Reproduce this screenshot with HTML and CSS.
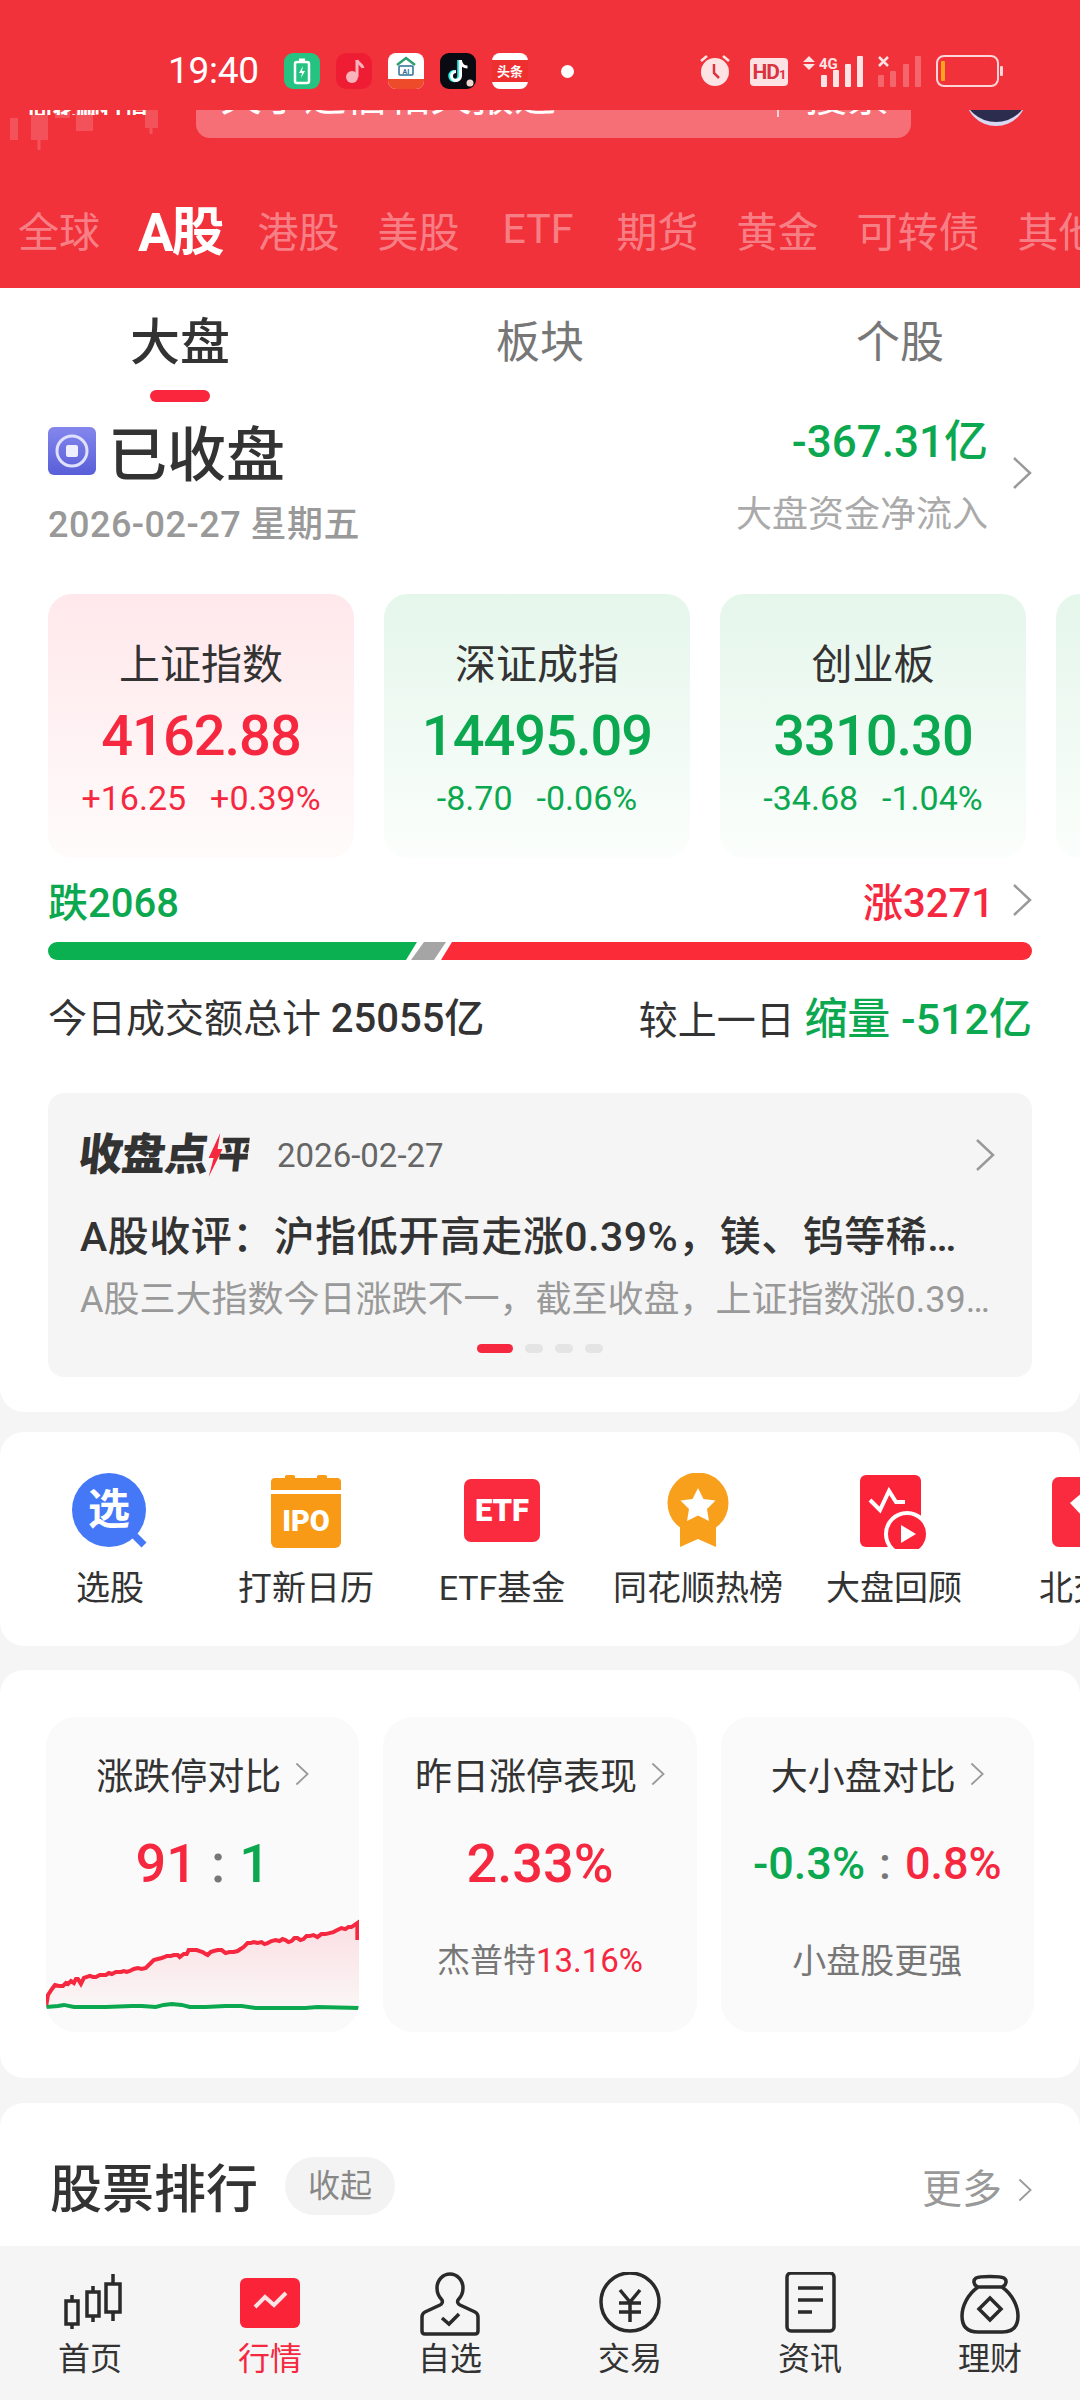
FILE: index.html
```html
<!DOCTYPE html>
<html lang="zh-CN">
<head>
    <meta charset="UTF-8">
    <meta name="viewport" content="width=device-width, initial-scale=1.0">
    <title>行情</title>
    <link rel="stylesheet" href="styles.css">
</head>
<body>
<div class="page">
    <header class="header">
        <div class="status">
            <span class="time">19:40</span>
            <svg class="app" viewBox="0 0 36 36"><rect width="36" height="36" rx="9" fill="#26c281"/><rect x="11" y="9" width="14" height="21" rx="2" fill="none" stroke="#fff" stroke-width="2.5"/><rect x="15" y="5.5" width="6" height="3" fill="#fff"/><path d="M19 13l-4 7h3l-1 5 4-7h-3z" fill="#fff"/></svg>
            <svg class="app" viewBox="0 0 36 36"><rect width="36" height="36" rx="10" fill="#ef1d33"/><path d="M21 7v17" stroke="#f9b3ba" stroke-width="3"/><circle cx="16" cy="24" r="6" fill="#f9b3ba"/><path d="M21 7c1 4 5 4 6 8" fill="none" stroke="#f9b3ba" stroke-width="3"/></svg>
            <svg class="app" viewBox="0 0 36 36"><rect width="36" height="36" rx="8" fill="#fff"/><path d="M0 26h36v2a8 8 0 0 1-8 8H8a8 8 0 0 1-8-8z" fill="#ee4b2b"/><path d="M9 12L18 5l9 7" fill="none" stroke="#2c9f6f" stroke-width="2.500"/><rect x="11" y="13" width="14" height="9" rx="1" fill="none" stroke="#2a6f97" stroke-width="1.500"/><text x="18" y="20.500" class="app-mini">AI</text></svg>
            <svg class="app" viewBox="0 0 36 36"><rect width="36" height="36" rx="9" fill="#0a0a12"/><path d="M19 7v16a4.500 4.500 0 1 1-4.500-4.500" fill="none" stroke="#25f4ee" stroke-width="3.500"/><path d="M20.500 7v16a4.500 4.500 0 1 1-4.500-4.500M20.500 8c1 4 4 6 7 6" fill="none" stroke="#fff" stroke-width="3"/><circle cx="30" cy="30" r="3.500" fill="#f2d9d0"/></svg>
            <svg class="app" viewBox="0 0 36 36"><rect width="36" height="36" rx="8" fill="#fff"/><rect y="7" width="36" height="22" fill="#ee2f2f"/><text x="18" y="23" class="app-toutiao">头条</text></svg>
            <span class="dot"></span>
            <div class="status-right">
                <svg class="ic-alarm" viewBox="0 0 32 34"><path d="M2 8l6-5M30 8l-6-5" stroke="#fde3e4" stroke-width="2.500"/><circle cx="16" cy="19" r="14" fill="#fde3e4"/><path d="M15 11v9l5 5" fill="none" stroke="#d9343f" stroke-width="2.500"/></svg>
                <span class="hd">HD<small>1</small></span>
                <svg class="ic-signal" viewBox="0 0 60 32"><path d="M6 1l6 6H0zM6 15l6-6H0z" fill="#fde3e4"/><text x="16" y="14" class="net">4G</text><rect x="18" y="20" width="6" height="12" rx="1" fill="#fde3e4"/><rect x="30" y="15" width="6" height="17" rx="1" fill="#fde3e4"/><rect x="42" y="9" width="6" height="23" rx="1" fill="#fde3e4"/><rect x="54" y="1" width="6" height="31" rx="1" fill="#fde3e4"/></svg>
                <svg class="ic-signal2" viewBox="0 0 44 32"><path d="M1 2l9 9M10 2l-9 9" stroke="#fde3e4" stroke-width="2.500"/><rect y="20" width="6" height="12" rx="1" fill="#fff" opacity=".25"/><rect x="12" y="16" width="6" height="16" rx="1" fill="#fff" opacity=".25"/><rect x="25" y="9" width="6" height="23" rx="1" fill="#fff" opacity=".25"/><rect x="37" y="1" width="6" height="31" rx="1" fill="#fff" opacity=".25"/></svg>
                <svg class="ic-battery" viewBox="0 0 67 32"><rect x="1" y="1" width="61" height="30" rx="7" fill="none" stroke="#fbd5d7" stroke-width="2"/><rect x="5" y="6" width="4" height="20" rx="1" fill="#f8a51d"/><rect x="64" y="11" width="3" height="10" rx="1" fill="#fbd5d7"/></svg>
            </div>
        </div>
        <div class="search-row">
            <div class="logo">
                <span class="logo-text">同花顺行情</span>
                <svg class="logo-candles" viewBox="0 0 150 40"><path d="M0 8h8v22H0zM21 5h17v25H21zM45 0h15v8H45zM66 0h17v21H66zM135 0h13v18h-13z" fill="#fff" opacity=".16"/><path d="M29 30v10M141 18v6" stroke="#fff" stroke-width="3" opacity=".16"/></svg>
            </div>
            <div class="search">
                <span class="search-text">关于通信相关报道</span>
                <span class="search-line"></span>
                <span class="search-btn">搜索</span>
            </div>
            <div class="avatar"><div class="avatar-in"></div></div>
        </div>
        <nav class="market-tabs">
            <span>全球</span>
            <span class="on">A股</span>
            <span>港股</span>
            <span>美股</span>
            <span class="etf">ETF</span>
            <span>期货</span>
            <span>黄金</span>
            <span>可转债</span>
            <span>其他</span>
        </nav>
    </header>

    <section class="block block-main">
        <div class="sub-tabs">
            <div class="sub-tab on">大盘<i></i></div>
            <div class="sub-tab">板块</div>
            <div class="sub-tab">个股</div>
        </div>

        <div class="closing">
            <div>
                <div class="closing-title">
                    <svg class="stop-ic" viewBox="0 0 48 48"><defs><linearGradient id="st" x1="0" y1="0" x2="0" y2="1"><stop offset="0" stop-color="#8387ec"/><stop offset="1" stop-color="#5a5ed8"/></linearGradient></defs><rect width="48" height="48" rx="6" fill="url(#st)"/><circle cx="24" cy="24" r="15" fill="none" stroke="#dfe0fb" stroke-width="3"/><rect x="18" y="18" width="12" height="12" rx="2" fill="#eeeefd"/></svg>
                    <span>已收盘</span>
                </div>
                <div class="closing-date">2026-02-27 星期五</div>
            </div>
            <div class="flow">
                <div>
                    <div class="flow-num green">-367.31亿</div>
                    <div class="flow-label">大盘资金净流入</div>
                </div>
                <svg class="chev" viewBox="0 0 20 32"><path d="M2 1l16 15L2 31" /></svg>
            </div>
        </div>

        <div class="index-row">
            <div class="index-card up">
                <div class="index-name">上证指数</div>
                <div class="index-val red">4162.88</div>
                <div class="index-sub red"><span>+16.25</span><span>+0.39%</span></div>
            </div>
            <div class="index-card down">
                <div class="index-name">深证成指</div>
                <div class="index-val green">14495.09</div>
                <div class="index-sub green"><span>-8.70</span><span>-0.06%</span></div>
            </div>
            <div class="index-card down">
                <div class="index-name">创业板</div>
                <div class="index-val green">3310.30</div>
                <div class="index-sub green"><span>-34.68</span><span>-1.04%</span></div>
            </div>
            <div class="index-card down"></div>
        </div>

        <div class="breadth">
            <span class="green">跌2068</span>
            <div class="breadth-right">
                <span class="red">涨3271</span>
                <svg class="chev" viewBox="0 0 20 32"><path d="M2 1l16 15L2 31" /></svg>
            </div>
        </div>
        <svg class="breadth-bar" viewBox="0 0 984 18"><path d="M9 0H369L358 18H9A9 9 0 0 1 9 0z" fill="#0bb150"/><path d="M376 0H398L386 18H363z" fill="#a5a5a5"/><path d="M404 0H975A9 9 0 0 1 975 18H393z" fill="#fb2b37"/></svg>

        <div class="turnover">
            <div>今日成交额总计 <b>25055亿</b></div>
            <div>较上一日 <b class="green big">缩量 -512亿</b></div>
        </div>

        <div class="review">
            <div class="review-head">
                <span class="review-logo">收盘点<svg class="bolt" viewBox="0 0 13 44"><path d="M9 0L0 25h5L2 44 13 16H8z" fill="#f6283f"/></svg><span class="review-ping">平</span></span>
                <span class="review-date">2026-02-27</span>
                <svg class="chev chev-review" viewBox="0 0 20 32"><path d="M2 1l16 15L2 31" /></svg>
            </div>
            <div class="review-title">A股收评&#xFF1A;沪指低开高走涨0.39%&#xFF0C;镁、钨等稀土永磁概念股走强</div>
            <div class="review-text">A股三大指数今日涨跌不一&#xFF0C;截至收盘&#xFF0C;上证指数涨0.39%&#xFF0C;深证成指跌0.06%</div>
            <div class="pager"><i class="on"></i><i></i><i></i><i></i></div>
        </div>
    </section>

    <section class="block block-tools">
        <div class="tool">
            <svg class="tool-ic" viewBox="0 0 76 76"><path d="M58 58l14 14" stroke="#4478f7" stroke-width="7"/><circle cx="37" cy="37" r="37" fill="#4478f7"/><text x="37" y="51" class="tool-xuan">选</text></svg>
            <span>选股</span>
        </div>
        <div class="tool">
            <svg class="tool-ic" viewBox="0 0 76 76"><path d="M3 7a4 4 0 0 1 4-4h10V1a3 3 0 0 1 3-1h4a3 3 0 0 1 3 1v2h22V1a3 3 0 0 1 3-1h4a3 3 0 0 1 3 1v2h10a4 4 0 0 1 4 4v8H3z" fill="#f89a16" transform="translate(0 2)"/><path d="M3 21h70v48a6 6 0 0 1-6 6H9a6 6 0 0 1-6-6z" fill="#f89a16"/><text x="38" y="58" class="tool-ipo">IPO</text></svg>
            <span>打新日历</span>
        </div>
        <div class="tool">
            <svg class="tool-ic" viewBox="0 0 76 76"><rect y="6" width="76" height="63" rx="7" fill="#fb2b3f"/><text x="38" y="48" class="tool-etf">ETF</text></svg>
            <span>ETF基金</span>
        </div>
        <div class="tool">
            <svg class="tool-ic" viewBox="0 0 76 76"><path d="M20 50h36v24L38 66 20 74z" fill="#f89f1c"/><circle cx="38" cy="30" r="30.500" fill="#f89f1c"/><path d="M38 15l5.500 11 12 1.500-8.500 8.500 2 12-11-5.500-11 5.500 2-12-8.500-8.500 12-1.500z" fill="#fff"/></svg>
            <span>同花顺热榜</span>
        </div>
        <div class="tool">
            <svg class="tool-ic" viewBox="0 0 76 76"><rect x="4" y="2" width="61" height="72" rx="6" fill="#fb2338"/><path d="M14 27l10 10 9-19 7 11h9" fill="none" stroke="#fff" stroke-width="4"/><circle cx="51" cy="61" r="21" fill="#fb2338" stroke="#fff" stroke-width="4"/><path d="M45 52l15 9-15 9z" fill="#fff"/></svg>
            <span>大盘回顾</span>
        </div>
        <div class="tool">
            <svg class="tool-ic" viewBox="0 0 76 76"><rect y="4" width="76" height="70" rx="7" fill="#fb2b3f"/><path d="M18 30l14-12h20l14 12-24 26z" fill="#fff"/></svg>
            <span>北交所</span>
        </div>
    </section>

    <section class="block block-cards">
        <div class="mini-card">
            <div class="mini-title">涨跌停对比<svg class="chev chev-mini" viewBox="0 0 20 32"><path d="M2 1l16 15L2 31" /></svg></div>
            <div class="mini-val"><span class="red">91</span><span class="colon">:</span><span class="green">1</span></div>
            <svg class="mini-chart" viewBox="0 0 314 92">
                <defs><linearGradient id="area" x1="0" y1="0" x2="0" y2="1"><stop offset="0" stop-color="#fbdfe3"/><stop offset="1" stop-color="#faf6f6"/></linearGradient></defs>
                <path d="M0 88L2 76 6 70 9 66 17 67 22 65 25 62 28 64 32 60 35 65 38 59 44 57 50 58 57 56 66 55 75 53 84 52 92 49 100 49 104 45 108 41 112 40 121 37 132 36 141 35 143 31 151 31 157 33 162 36 168 32 176 31 184 33 192 32 198 28 202 24 208 23 216 23 222 24 230 21 240 21 246 22 252 19 258 20 264 17 272 18 276 15 288 13 296 9 306 8 312 4 312 20 314 20V88z" fill="url(#area)"/>
                <polyline class="line-red" points="0,88 2,76 6,70 9,66 13,67 17,67 20,64 22,65 25,62 28,64 30,60 32,60 35,65 38,59 41,58 44,57 47,58 50,58 54,56 57,56 60,56 63,54 66,55 70,53 75,53 78,52 81,53 84,52 88,50 92,49 96,50 100,49 104,45 108,41 112,40 116,39 119,38 121,37 125,37 128,36 132,36 134,38 138,35 141,35 143,31 147,31 151,31 154,32 157,33 160,35 162,36 165,33 168,32 172,31 176,31 180,34 184,33 188,33 192,32 195,30 198,28 202,24 205,24 208,23 212,24 216,23 219,25 222,24 226,22 230,21 234,22 237,20 240,21 243,23 246,22 249,19 252,19 255,21 258,20 261,17 264,17 268,16 272,18 276,15 280,15 284,14 288,13 292,11 296,9 300,10 303,8 306,8 309,6 312,4 312,21"/>
                <polyline class="line-green" points="0,88 12,87 18,86 28,88 60,88 86,87 96,87 110,88 118,86 126,85 136,86 144,88 160,88 180,87 196,87 210,89 260,89 272,88 314,89"/>
            </svg>
        </div>
        <div class="mini-card">
            <div class="mini-title">昨日涨停表现<svg class="chev chev-mini" viewBox="0 0 20 32"><path d="M2 1l16 15L2 31" /></svg></div>
            <div class="mini-val red">2.33%</div>
            <div class="mini-sub">杰普特<span class="red">13.16%</span></div>
        </div>
        <div class="mini-card">
            <div class="mini-title">大小盘对比<svg class="chev chev-mini" viewBox="0 0 20 32"><path d="M2 1l16 15L2 31" /></svg></div>
            <div class="mini-val mini-val-sm"><span class="green">-0.3%</span><span class="colon">:</span><span class="red">0.8%</span></div>
            <div class="mini-sub mini-sub-gap">小盘股更强</div>
        </div>
    </section>

    <section class="block block-rank">
        <h2>股票排行</h2>
        <span class="pill">收起</span>
        <div class="more">更多<svg class="chev" viewBox="0 0 20 32"><path d="M2 1l16 15L2 31" /></svg></div>
    </section>

    <footer class="nav">
        <div class="nav-item">
            <svg viewBox="0 0 64 64" class="nav-ic"><path d="M14 23v6M14 52v5M35 14v6M35 44v6M55 2v10M55 40v9M8 29h12v23H8zM29 20h12v24H29zM48 12h14v28H48z"/></svg>
            <span>首页</span>
        </div>
        <div class="nav-item on">
            <svg viewBox="0 0 64 64" class="nav-ic nav-ic-on"><rect x="2" y="6" width="60" height="50" rx="6" fill="#fb2338"/><path d="M17 35l10-10 9 8 12-12" fill="none" stroke="#fde3e4" stroke-width="4"/></svg>
            <span>行情</span>
        </div>
        <div class="nav-item">
            <svg viewBox="0 0 64 64" class="nav-ic"><path d="M24 28c-3-3-5-7-5-12C19 8 25 2 32 2s13 6 13 14c0 5-2 9-5 12-1 2 0 4 2 5l15 7c2 1 3 3 3 5v14c0 2-1 3-3 3H7c-2 0-3-1-3-3V45c0-2 1-4 3-5l15-7c2-1 3-3 2-5z"/><path d="M24 46l7 6 10-10"/></svg>
            <span>自选</span>
        </div>
        <div class="nav-item">
            <svg viewBox="0 0 64 64" class="nav-ic"><circle cx="32" cy="30" r="29"/><path d="M22 18l10 12 10-12M21 31h22M21 40h22M32 30v20"/></svg>
            <span>交易</span>
        </div>
        <div class="nav-item">
            <svg viewBox="0 0 64 64" class="nav-ic"><rect x="9" y="1" width="47" height="58" rx="4"/><path d="M20 16h25M20 28h25M20 40h14"/></svg>
            <span>资讯</span>
        </div>
        <div class="nav-item">
            <svg viewBox="0 0 64 64" class="nav-ic"><path d="M20 15c-5-2-5-7-2-9 4-2 24-2 28 0 3 2 3 7-2 9 10 7 16 19 16 29 0 11-6 16-16 16H20C10 60 4 55 4 44c0-10 6-22 16-29zM20 15h24"/><path d="M32 26l11 11-11 11-11-11z"/></svg>
            <span>理财</span>
        </div>
    </footer>
</div>
</body>
</html>
```

FILE: styles.css
```css
* {
    box-sizing: border-box;
}

html, body {
    margin: 0;
    padding: 0;
}

body {
    font-family: Roboto, "Noto Sans CJK SC", sans-serif;
    color: #333;
    background-color: #f5f5f5;
}

.page {
    width: 1080px;
    height: 2400px;
    overflow: hidden;
    display: flex;
    flex-direction: column;
    background-color: #f5f5f5;
}

.red {
    color: #f6283f;
}

.green {
    color: #0ba850;
}

/* header */
.header {
    flex: none;
    height: 288px;
    background-color: #f2323b;
}

.status {
    height: 110px;
    padding: 53px 0 0 168px;
    display: flex;
    align-items: flex-start;
}

.time {
    width: 116px;
    font-size: 37px;
    line-height: 36px;
    color: #fff;
    letter-spacing: -0.3px;
}

.app {
    width: 36px;
    height: 36px;
    margin-right: 16px;
}

.app-mini {
    font: bold 7px Roboto, sans-serif;
    fill: #2a6f97;
    text-anchor: middle;
}

.app-toutiao {
    font: bold 13px "Noto Sans CJK SC", sans-serif;
    fill: #fff;
    text-anchor: middle;
}

.dot {
    width: 13px;
    height: 13px;
    margin: 12px 0 0 17px;
    border-radius: 50%;
    background-color: #fff;
}

.status-right {
    display: flex;
    align-items: flex-start;
    margin-left: 125px;
}

.ic-alarm {
    width: 32px;
    height: 34px;
    margin-right: 19px;
}

.hd {
    width: 38px;
    height: 28px;
    margin: 5px 15px 0 0;
    border-radius: 4px;
    background-color: #fde3e4;
    color: #d9343f;
    font: bold 21px/28px Roboto, sans-serif;
    text-align: center;
    letter-spacing: -1px;
}

.hd small {
    font-size: 13px;
}

.ic-signal {
    width: 60px;
    height: 32px;
    margin: 2px 15px 0 0;
}

.net {
    font: bold 15px Roboto, sans-serif;
    fill: #fde3e4;
}

.ic-signal2 {
    width: 44px;
    height: 32px;
    margin: 2px 14px 0 0;
}

.ic-battery {
    width: 67px;
    height: 32px;
    margin-top: 2px;
}

.search-row {
    height: 60px;
    overflow: hidden;
    display: flex;
    align-items: flex-start;
}

.logo {
    width: 196px;
    height: 40px;
    padding-left: 10px;
}

.logo-text {
    display: block;
    height: 5px;
    padding-left: 18px;
    overflow: hidden;
    font-size: 24px;
    font-weight: 700;
    line-height: 0;
    color: #fff;
    white-space: nowrap;
}

.logo-candles {
    display: block;
    width: 150px;
    height: 40px;
    margin-top: -5px;
}

.search {
    width: 715px;
    height: 28px;
    display: flex;
    align-items: flex-start;
    overflow: hidden;
    border-radius: 0 0 14px 14px;
    background-color: rgba(255, 255, 255, 0.3);
    color: #fff;
    font-size: 42px;
    line-height: 42px;
}

.search-text {
    width: 581px;
    margin-top: -34px;
    padding-left: 24px;
    white-space: nowrap;
}

.search-line {
    width: 2px;
    height: 7px;
    background-color: rgba(255, 255, 255, 0.7);
}

.search-btn {
    margin: -34px 0 0 26px;
}

.avatar {
    width: 62px;
    height: 16px;
    margin-left: 54px;
    overflow: hidden;
}

.avatar-in {
    width: 62px;
    height: 62px;
    margin-top: -46px;
    border-radius: 50%;
    border-bottom: 4px solid #d9d8f3;
    background-color: #2c2d4e;
}

.market-tabs {
    display: flex;
    align-items: center;
    gap: 38px;
    height: 118px;
    padding-left: 18px;
    white-space: nowrap;
    font-size: 41px;
    color: rgba(255, 255, 255, 0.4);
}

.market-tabs span {
    flex: none;
}

.market-tabs .on {
    margin: -2px -3px 0 0;
    font-size: 53px;
    font-weight: 700;
    color: #fff;
    letter-spacing: -2px;
}

.market-tabs .etf {
    margin: 0 5px;
}

/* blocks */
.block {
    flex: none;
    background-color: #fff;
}

.block-main {
    height: 1124px;
    padding: 0 48px;
    border-radius: 0 0 24px 24px;
}

.sub-tabs {
    height: 120px;
    margin: 0 -48px;
    display: grid;
    grid-template-columns: repeat(3, 360px);
}

.sub-tab {
    padding-top: 23px;
    text-align: center;
    font-size: 44px;
    line-height: 64px;
    color: #777;
}

.sub-tab.on {
    padding-right: 0;
    font-size: 50px;
    font-weight: 500;
    color: #333;
}

.sub-tab i {
    display: block;
    width: 60px;
    height: 12px;
    margin: 15px auto 0;
    border-radius: 6px;
    background-color: #f9263e;
}

.closing {
    height: 186px;
    display: flex;
    justify-content: space-between;
}

.closing-title {
    display: flex;
    align-items: center;
    gap: 12px;
    height: 70px;
    margin-top: 13px;
    font-size: 59px;
    font-weight: 500;
    line-height: 70px;
}

.stop-ic {
    width: 48px;
    height: 48px;
    margin-top: -10px;
}

.closing-date {
    margin-top: 13px;
    font-size: 36px;
    font-weight: 500;
    line-height: 42px;
    color: #999;
    letter-spacing: 0.5px;
}

.flow {
    display: flex;
    align-items: flex-start;
}

.flow > div {
    text-align: right;
}

.flow-num {
    margin-top: 6px;
    font-size: 44px;
    font-weight: 500;
    line-height: 56px;
}

.flow-label {
    margin-top: 21px;
    font-size: 36px;
    line-height: 48px;
    color: #aaa;
}

.chev {
    width: 20px;
    height: 32px;
    fill: none;
    stroke: #999;
    stroke-width: 2.5;
}

.flow .chev {
    margin: 49px 0 0 24px;
}

.index-row {
    display: flex;
    gap: 30px;
    margin-right: -100px;
}

.index-card {
    flex: none;
    width: 306px;
    height: 264px;
    padding-top: 45px;
    text-align: center;
    border-radius: 24px;
}

.index-card.up {
    background: linear-gradient(#ffe8eb, #fffbfb);
}

.index-card.down {
    background: linear-gradient(#e5f6eb, #fbfefc);
}

.index-name {
    font-size: 41px;
    line-height: 52px;
}

.index-val {
    margin-top: 12px;
    font-size: 56px;
    font-weight: 500;
    line-height: 66px;
    letter-spacing: -1px;
}

.index-sub {
    display: flex;
    justify-content: center;
    gap: 24px;
    margin-top: 10px;
    font-size: 34px;
    line-height: 38px;
}

.breadth {
    height: 84px;
    display: flex;
    justify-content: space-between;
    align-items: center;
    font-size: 40px;
    font-weight: 500;
}

.breadth-right {
    display: flex;
    align-items: center;
    gap: 18px;
}

.breadth-bar {
    display: block;
    width: 984px;
    height: 18px;
}

.turnover {
    height: 133px;
    padding-top: 32px;
    display: flex;
    justify-content: space-between;
    font-size: 39px;
    line-height: 54px;
}

.turnover b {
    font-size: 40px;
    font-weight: 500;
}

.turnover .big {
    font-size: 43px;
}

.review {
    height: 284px;
    padding: 34px 45px 0 32px;
    border-radius: 16px;
    background-color: #f5f5f5;
}

.review-head {
    display: flex;
    align-items: center;
    height: 56px;
    margin-right: -13px;
}

.review-logo {
    flex: none;
    width: 197px;
    display: flex;
    align-items: center;
    font-size: 44px;
    font-weight: 900;
    line-height: 56px;
    letter-spacing: -1px;
    white-space: nowrap;
    transform: translateX(-4px) skewX(-6deg);
    transform-origin: left bottom;
}

.bolt {
    width: 13px;
    height: 44px;
    margin-left: 1px;
}

.review-ping {
    width: 30px;
    margin-left: -4px;
    overflow: hidden;
    font-size: 38px;
}

.review-date {
    font-size: 33px;
    color: #666;
}

.chev-review {
    margin-left: auto;
    margin-right: 5px;
}

.review-title,
.review-text {
    overflow: hidden;
    white-space: nowrap;
    text-overflow: ellipsis;
}

.review-title {
    margin-top: 26px;
    font-size: 41px;
    font-weight: 500;
    line-height: 56px;
    letter-spacing: 0.5px;
    color: #333;
}

.review-text {
    margin: 9px -10px 0 0;
    font-size: 36px;
    line-height: 52px;
    color: #999;
}

.pager {
    display: flex;
    justify-content: center;
    gap: 12px;
    margin: 18px 0 0 13px;
}

.pager i {
    width: 18px;
    height: 9px;
    border-radius: 5px;
    background-color: #e4e4e4;
}

.pager i.on {
    width: 36px;
    background-color: #f6283f;
}

/* tools */
.block-tools {
    height: 214px;
    margin-top: 20px;
    display: flex;
    border-radius: 24px;
    overflow: hidden;
}

.tool {
    flex: none;
    width: 196px;
    padding-top: 41px;
    display: flex;
    flex-direction: column;
    align-items: center;
    font-size: 34px;
    line-height: 50px;
    white-space: nowrap;
}

.tool:first-child {
    margin-left: 12px;
}

.tool-ic {
    width: 76px;
    height: 76px;
    margin-bottom: 14px;
}

.tool-xuan {
    font: bold 42px "Noto Sans CJK SC", sans-serif;
    fill: #fff;
    text-anchor: middle;
}

.tool-ipo {
    font: 900 29px Roboto, sans-serif;
    fill: #fff;
    text-anchor: middle;
}

.tool-etf {
    font: 900 31px Roboto, sans-serif;
    fill: #fff;
    text-anchor: middle;
}

/* mini cards */
.block-cards {
    height: 408px;
    margin-top: 24px;
    padding: 47px 46px 0;
    display: flex;
    gap: 24px;
    border-radius: 24px;
}

.mini-card {
    flex: 1;
    height: 315px;
    overflow: hidden;
    border-radius: 30px;
    background-color: #fafafa;
    text-align: center;
}

.mini-title {
    display: flex;
    justify-content: center;
    align-items: center;
    gap: 14px;
    height: 50px;
    margin-top: 32px;
    font-size: 37px;
    white-space: nowrap;
}

.chev-mini {
    width: 14px;
    height: 24px;
}

.mini-val {
    height: 70px;
    margin-top: 30px;
    font-size: 54px;
    font-weight: 500;
    line-height: 70px;
}

.mini-val-sm {
    font-size: 45px;
    white-space: nowrap;
}

.colon {
    margin: 0 14px;
    color: #777;
}

.mini-chart {
    display: block;
    width: 100%;
    height: 92px;
    margin-top: 20px;
}

.line-red {
    fill: none;
    stroke: #f6283f;
    stroke-width: 4;
}

.line-green {
    fill: none;
    stroke: #0ba850;
    stroke-width: 4;
}

.mini-sub {
    margin-top: 38px;
    font-size: 33px;
    line-height: 48px;
    color: #777;
}

.mini-sub-gap {
    font-size: 34px;
}

/* rank */
.block-rank {
    height: 170px;
    margin-top: 25px;
    padding: 50px 48px 0 50px;
    display: flex;
    align-items: flex-start;
    border-radius: 24px 24px 0 0;
}

.block-rank h2 {
    margin: 4px 0 0;
    font-size: 52px;
    font-weight: 500;
    line-height: 68px;
}

.pill {
    width: 110px;
    height: 58px;
    margin: 4px 0 0 27px;
    border-radius: 29px;
    background-color: #f3f3f3;
    font-size: 32px;
    line-height: 58px;
    text-align: center;
    color: #888;
}

.more {
    display: flex;
    align-items: center;
    gap: 16px;
    margin: 3px 0 0 auto;
    font-size: 40px;
    line-height: 68px;
    color: #999;
}

.more .chev {
    width: 14px;
    height: 28px;
}

/* bottom nav */
.nav {
    flex: none;
    height: 154px;
    margin-top: -27px;
    position: relative;
    display: flex;
    background-color: #f5f5f5;
}

.nav-item {
    flex: 1;
    padding-top: 26px;
    display: flex;
    flex-direction: column;
    align-items: center;
    font-size: 32px;
    line-height: 44px;
    color: #333;
}

.nav-item.on {
    color: #f6283f;
}

.nav-ic {
    width: 64px;
    height: 64px;
    margin-bottom: 1px;
    fill: none;
    stroke: #2a2a2a;
    stroke-width: 3.5;
}

.nav-ic-on {
    stroke: none;
}
```
